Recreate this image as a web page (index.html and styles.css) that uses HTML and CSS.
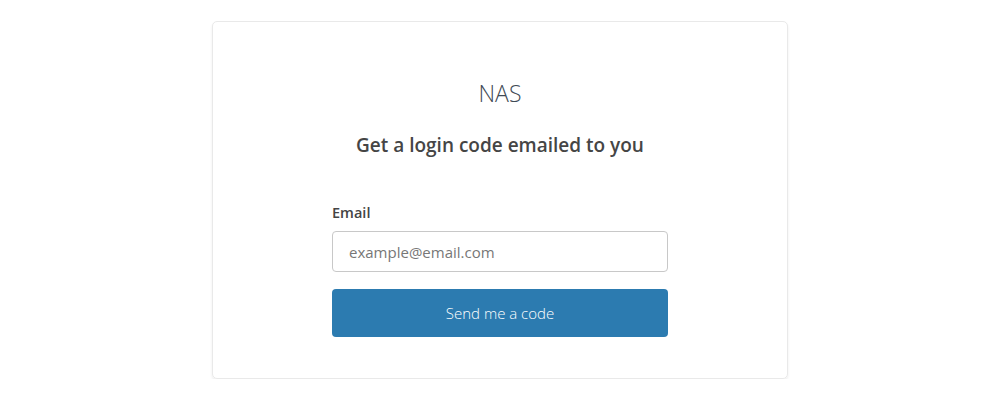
FILE: index.html
```html
<!DOCTYPE html>
<html lang="en">
<head>
<meta charset="utf-8">
<title>NAS Login</title>
<link rel="stylesheet" href="styles.css">
</head>
<body>
<main class="page">
  <section class="card">
    <h1 class="brand">NAS</h1>
    <h2 class="title">Get a login code emailed to you</h2>
    <form class="form">
      <label class="label" for="email">Email</label>
      <input class="input" id="email" type="email" placeholder="example@email.com">
      <button class="button" type="button">Send me a code</button>
    </form>
  </section>
</main>
</body>
</html>
```
FILE: styles.css
```css
* { box-sizing: border-box; }
html, body { margin: 0; padding: 0; background: #fff; }
body {
  font-family: "Open Sans", "Noto Sans", sans-serif;
  color: #444;
}
.page {
  display: flex;
  justify-content: center;
  padding-top: 21px;
}
.card {
  width: 576px;
  border: 1px solid #e9e9e9;
  border-radius: 5px;
  box-shadow: 0 2px 3px rgba(0,0,0,0.07);
  padding: 55px 119px 41px;
  display: flex;
  flex-direction: column;
  align-items: center;
}
.brand {
  margin: 0;
  font-size: 23px;
  font-weight: 300;
  line-height: 32px;
  color: #3f4a55;
}
.title {
  margin: 23px 0 0;
  font-size: 19px;
  font-weight: 600;
  line-height: 26px;
  color: #454545;
}
.form {
  width: 336px;
  margin-top: 45px;
  display: flex;
  flex-direction: column;
}
.label {
  font-size: 14.5px;
  font-weight: 600;
  line-height: 20px;
  color: #444;
}
.input {
  margin-top: 8px;
  height: 41px;
  border: 1px solid #c8c8c8;
  border-radius: 4px;
  padding: 0 16px;
  font-family: inherit;
  font-size: 15px;
  color: #444;
}
.input::placeholder { color: #777; }
.button {
  margin-top: 17px;
  height: 48px;
  border: none;
  border-radius: 4px;
  background: #2c7bb0;
  color: #fff;
  font-family: inherit;
  font-size: 15px;
  font-weight: 300;
}
```
